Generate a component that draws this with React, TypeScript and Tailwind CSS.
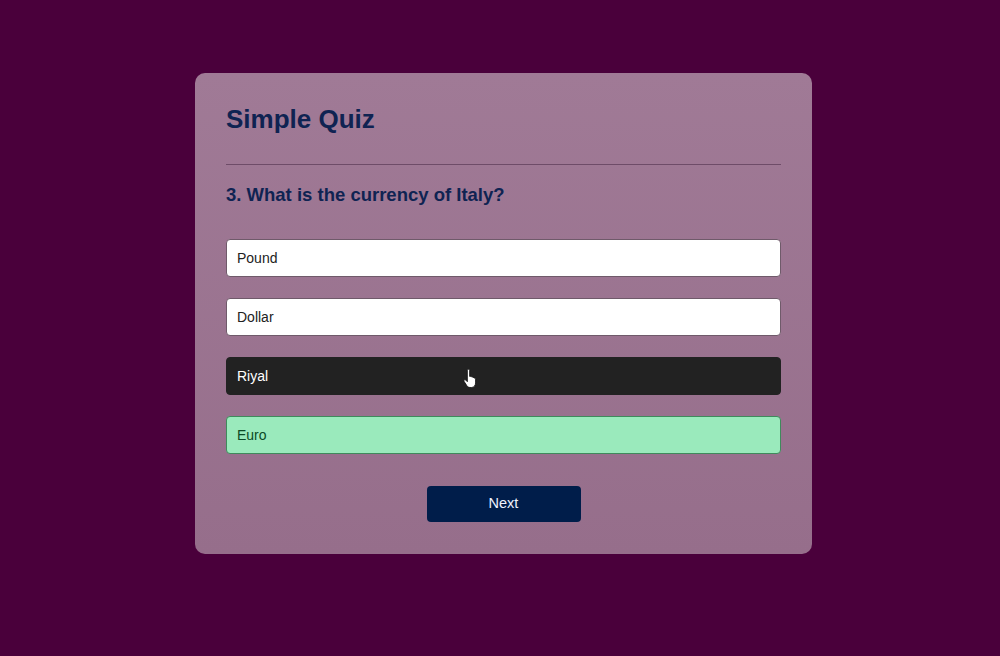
import { useState } from 'react';

interface Answer {
  text: string;
  state: 'idle' | 'hover' | 'correct';
}

const answers: Answer[] = [
  { text: 'Pound', state: 'idle' },
  { text: 'Dollar', state: 'idle' },
  { text: 'Riyal', state: 'hover' },
  { text: 'Euro', state: 'correct' },
];

function HandCursor() {
  return (
    <svg width="15" height="19" viewBox="0 0 14 18" className="absolute left-[236px] top-[11px]">
      <path
        d="M4 1.5c0-.8.5-1.3 1.1-1.3s1.1.5 1.1 1.3V7l.4-.1c.6-.2 1.2.1 1.4.6.5-.2 1.1 0 1.3.5.5-.2 1.1.1 1.3.6.6-.1 1.2.3 1.2 1v3.6c0 2.3-1.5 4.3-3.8 4.3H6.5c-1.2 0-2.2-.6-2.9-1.6L1 11.9c-.4-.6-.3-1.3.2-1.6.5-.3 1.1-.2 1.5.3L4 12V1.5z"
        fill="#ffffff"
        stroke="#111111"
        strokeWidth="0.8"
      />
    </svg>
  );
}

export default function App() {
  const [selected] = useState(3);

  const styleFor = (a: Answer) => {
    switch (a.state) {
      case 'hover':
        return 'bg-[#222222] text-white border-[#222222]';
      case 'correct':
        return 'bg-[#9aeabc] text-[#0b4a25] border-[#3f8a5c]';
      default:
        return 'bg-white text-[#222222] border-[#6f5a6a]';
    }
  };

  return (
    <div
      className="min-h-screen bg-[#4a003b] flex justify-center pt-[73px] pl-[7px]"
      style={{ fontFamily: '"Liberation Sans", Arial, sans-serif' }}
    >
      <div className="w-[617px] h-[481px] rounded-[10px] bg-gradient-to-b from-[#a07a96] to-[#966e8b] px-[31px] pt-[31px]">
        <h1 className="text-[26px] leading-[30px] font-bold text-[#0f2352] pb-[30px] border-b border-[#6e4c68]">
          Simple Quiz
        </h1>
        <h2 className="mt-[16px] text-[18.5px] leading-[27px] font-bold text-[#0f2352]">
          3. What is the currency of Italy?
        </h2>
        <div className="mt-[31px] flex flex-col gap-[21px]">
          {answers.map((a, i) => (
            <button
              key={a.text}
              className={`relative h-[38px] w-full rounded-[4px] border text-left pl-[10px] text-[14px] ${styleFor(a)} ${
                i === selected ? 'font-normal' : ''
              }`}
            >
              {a.text}
              {a.state === 'hover' && <HandCursor />}
            </button>
          ))}
        </div>
        <div className="flex justify-center mt-[32px]">
          <button className="w-[154px] h-[36px] rounded-[4px] bg-[#001d4a] text-[#eef2ff] text-[14.5px]">
            Next
          </button>
        </div>
      </div>
    </div>
  );
}
